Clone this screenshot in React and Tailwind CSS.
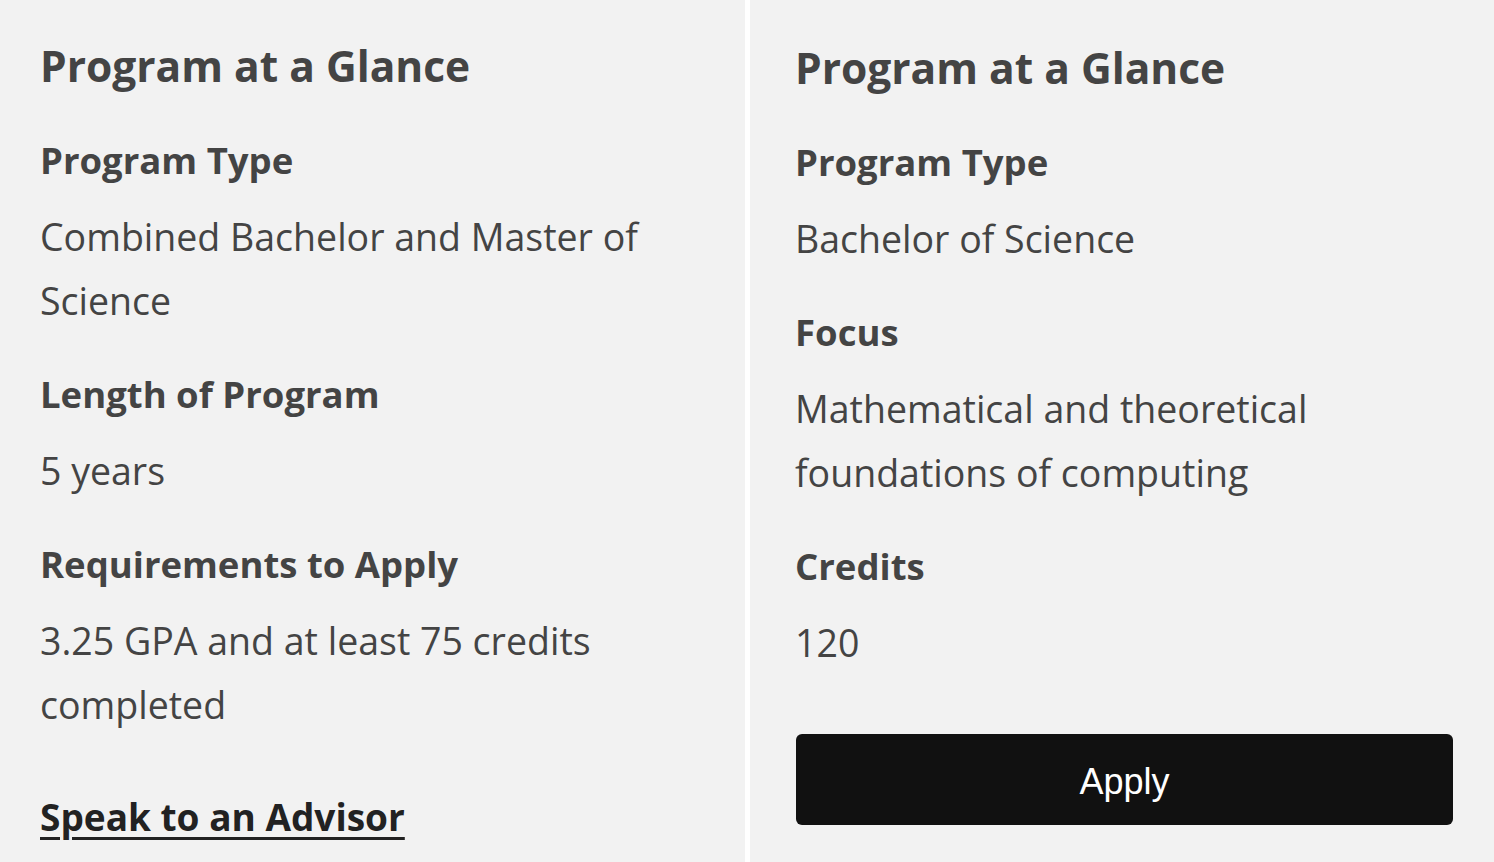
import React from "react";

const font = { fontFamily: '"Open Sans", "Lato", sans-serif' };

function Label({ children, className = "" }) {
  return (
    <h3 className={`text-[36.5px] leading-[48px] font-bold text-[#444444] ${className}`}>{children}</h3>
  );
}

function Value({ children, className = "" }) {
  return (
    <p className={`text-[37.5px] leading-[64px] font-normal text-[#444444] mt-[21px] ${className}`}>{children}</p>
  );
}

export default function App() {
  return (
    <div className="w-[1494px] h-[862px] overflow-hidden flex bg-white font-['Open_Sans',sans-serif]" style={font}>
      <section className="w-[745px] h-full bg-[#f2f2f2] pl-[40px] pr-[41px] pt-[38px]">
        <h2 className="text-[42.5px] leading-[56px] font-bold text-[#444444]">Program at a Glance</h2>
        <Label className="mt-[42px]">Program Type</Label>
        <Value>Combined Bachelor and Master of Science</Value>
        <Label className="mt-[37px]">Length of Program</Label>
        <Value>5 years</Value>
        <Label className="mt-[37px]">Requirements to Apply</Label>
        <Value>3.25 GPA and at least 75 credits completed</Value>
        <a
          href="#"
          className="block mt-[56px] text-[37px] leading-[48px] font-bold text-[#222222] underline decoration-[3px] underline-offset-[6px]"
        >
          Speak to an Advisor
        </a>
      </section>
      <div className="w-[5px] h-full bg-white" />
      <section className="flex-1 h-full bg-[#f2f2f2] pl-[45px] pr-[41px] pt-[40px]">
        <h2 className="text-[42.5px] leading-[56px] font-bold text-[#444444]">Program at a Glance</h2>
        <Label className="mt-[42px]">Program Type</Label>
        <Value>Bachelor of Science</Value>
        <Label className="mt-[37px]">Focus</Label>
        <Value>Mathematical and theoretical foundations of computing</Value>
        <Label className="mt-[37px]">Credits</Label>
        <Value>120</Value>
        <button
          className="mt-[59px] ml-[1px] w-[657px] h-[91px] rounded-[6px] bg-[#111111] text-white text-[36px] font-['Liberation_Sans',Arial,sans-serif]"
          style={{ fontFamily: '"Liberation Sans", Arial, sans-serif' }}
        >
          <span className="relative top-[2px]">Apply</span>
        </button>
      </section>
    </div>
  );
}
